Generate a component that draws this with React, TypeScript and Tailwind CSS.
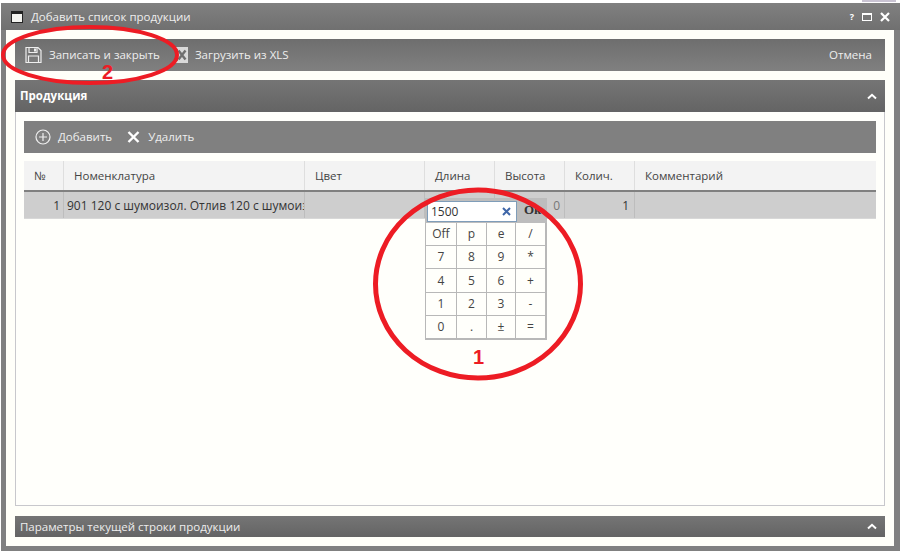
import React from 'react';

const columns = [
  { title: '№', width: 'w-[40px]', value: '1', align: 'text-right pr-[3px]' },
  { title: 'Номенклатура', width: 'w-[241px]', value: '901 120 с шумоизол. Отлив 120 с шумоизол.', align: 'pl-[3px]' },
  { title: 'Цвет', width: 'w-[120px]', value: '', align: '' },
  { title: 'Длина', width: 'w-[70px]', value: '', align: '' },
  { title: 'Высота', width: 'w-[70px]', value: '0', align: 'text-right pr-[4px] text-[#777]' },
  { title: 'Колич.', width: 'w-[70px]', value: '1', align: 'text-right pr-[5px]' },
  { title: 'Комментарий', width: 'flex-1', value: '', align: '' },
];

const keys = ['Off', 'p', 'e', '/', '7', '8', '9', '*', '4', '5', '6', '+', '1', '2', '3', '-', '0', '.', '±', '='];

const ChevronUp = () => (
  <svg width="10" height="7" viewBox="0 0 10 7" className="block">
    <path d="M1 5.5 L5 1.8 L9 5.5" fill="none" stroke="#fff" strokeWidth="2" />
  </svg>
);

const SaveIcon = () => (
  <svg width="17" height="18" viewBox="0 0 17 18" className="block">
    <path d="M1 1.5 H13 L16 4.5 V16.5 H1 Z" fill="none" stroke="#eee" strokeWidth="1.2" />
    <path d="M4 1.5 V6.5 H12 V1.5" fill="none" stroke="#eee" strokeWidth="1.2" />
    <rect x="9" y="2.5" width="2" height="3" fill="#eee" />
    <path d="M3.5 16.5 V10 H13.5 V16.5" fill="none" stroke="#eee" strokeWidth="1.2" />
  </svg>
);

const XlsIcon = () => (
  <svg width="12" height="16" viewBox="0 0 12 16" className="block">
    <rect x="0" y="0" width="12" height="16" fill="#d9d9d9" />
    <path d="M2.5 3.5 L9.5 12.5 M9.5 3.5 L2.5 12.5" stroke="#6f6f6f" strokeWidth="2.4" />
    <rect x="0" y="2" width="2" height="12" fill="#8a8a8a" />
  </svg>
);

const Section = ({ title, bold }: { title: string; bold?: boolean }) => (
  <div className={`mx-[9px] flex items-center justify-between pl-[5px] pr-[8px] text-[#eee] bg-gradient-to-b from-[#757575] to-[#646464] ${bold ? 'h-[32px] font-bold text-white' : 'h-[21px]'}`}>
    <span>{title}</span>
    <ChevronUp />
  </div>
);

export default function App() {
  return (
    <div className="relative w-[900px] h-[552px] overflow-hidden bg-white pt-[3px] pl-[1px] text-[11.5px] leading-none font-['Open_Sans','Noto_Sans',sans-serif]">
      {/* bit of the page behind the window */}
      <div className="absolute left-[862px] top-0 w-[34px] h-[2px] bg-[#c9c3d2]" />
      <div className="h-[548px] flex flex-col bg-[#808080] px-[5px] pb-[5px]">
        {/* window title */}
        <div className="h-[27px] shrink-0 flex items-center justify-between text-[#eee] bg-gradient-to-b from-[#808080] to-[#707070] -mx-[5px]">
          <div className="flex items-center gap-[8px] pl-[10px]">
            <span className="w-[12px] h-[12px] bg-[#f4f4f0] border border-[#222] border-t-[3px] block" />
            <span>Добавить список продукции</span>
          </div>
          <div className="flex items-center gap-[8px] pr-[10px]">
            <span className="font-bold text-[9px] text-white">?</span>
            <span className="w-[10px] h-[8px] border border-white border-t-2 block" />
            <svg width="10" height="10" viewBox="0 0 10 10" className="block">
              <path d="M1 1 L9 9 M9 1 L1 9" stroke="#fff" strokeWidth="2.2" />
            </svg>
          </div>
        </div>

        <div className="flex-1 flex flex-col bg-[#fffff9] pt-[9px] w-[888px]">
          {/* main toolbar */}
          <div className="mx-[9px] h-[32px] flex items-center justify-between bg-gradient-to-b from-[#6e6e6e] to-[#808080] text-[#eee] pl-[10px] pr-[13px]">
            <div className="flex items-center">
              <SaveIcon />
              <span className="ml-[7px]">Записать и закрыть</span>
              <span className="ml-[16px]"><XlsIcon /></span>
              <span className="ml-[7px]">Загрузить из XLS</span>
            </div>
            <span>Отмена</span>
          </div>

          <div className="h-[9px] shrink-0" />
          <Section title="Продукция" bold />

          {/* section body */}
          <div className="mx-[9px] h-[394px] shrink-0 border border-t-0 border-[#c8c8cc] bg-[#fffffb] px-[8px] pt-[9px]">
            <div className="h-[32px] flex items-center bg-[#808080] text-[#eee] pl-[11px]">
              <svg width="16" height="16" viewBox="0 0 16 16" className="block">
                <circle cx="8" cy="8" r="7" fill="none" stroke="#eee" strokeWidth="1.2" />
                <path d="M8 4 V12 M4 8 H12" stroke="#eee" strokeWidth="1.2" />
              </svg>
              <span className="ml-[7px]">Добавить</span>
              <svg width="13" height="12" viewBox="0 0 13 12" className="block ml-[15px]">
                <path d="M1.5 1 L11.5 11 M11.5 1 L1.5 11" stroke="#fff" strokeWidth="2.4" />
              </svg>
              <span className="ml-[8px]">Удалить</span>
            </div>

            {/* table */}
            <div className="mt-[8px] flex h-[31px] bg-[#f3f3f3] border-b-[2px] border-[#808080] text-[#444]">
              {columns.map((c) => (
                <div key={c.title} className={`${c.width} h-full flex items-center pl-[10px] border-r border-[#dedede] last:border-r-0`}>
                  {c.title}
                </div>
              ))}
            </div>
            <div className="flex h-[27px] bg-[#cecece] text-[#333] border-b border-[#d8d8d8] text-[12px]">
              {columns.map((c) => (
                <div key={c.title} className={`${c.width} ${c.align} h-full leading-[27px] overflow-hidden whitespace-nowrap border-r border-[#bdbdbd] last:border-r-0`}>
                  {c.value}
                </div>
              ))}
            </div>
          </div>

          <div className="h-[10px] shrink-0" />
          <Section title="Параметры текущей строки продукции" />
        </div>
      </div>

      {/* calculator popup */}
      <div className="absolute left-[425px] top-[198px] w-[122px] text-[#444] text-[12px]">
        <div className="flex h-[25px] bg-[#bdbdbd] pl-[2px] pt-[3px]">
          <div className="w-[90px] h-[21px] flex items-center justify-between bg-white border border-[#7f9db9] pl-[3px] pr-[5px] text-[#333]">
            <span>1500</span>
            <svg width="9" height="9" viewBox="0 0 9 9" className="block">
              <path d="M1 1 L8 8 M8 1 L1 8" stroke="#3f66a8" strokeWidth="2" />
            </svg>
          </div>
          <span className="ml-[7px] font-['Liberation_Serif',serif] font-bold text-[13px] leading-[18px] text-[#333]">Ok</span>
        </div>
        <div className="grid grid-cols-[30px_29px_28px_1fr] grid-rows-[22px_22px_23px_22px_22px] border border-[#b8b8b8] border-t-0 border-b-2 border-r-2 bg-[#b8b8b8] gap-px">
          {keys.map((k) => (
            <div key={k} className="bg-[#fffffb] flex items-center justify-center">{k}</div>
          ))}
        </div>
      </div>

      {/* red annotations on the screenshot */}
      <svg width="900" height="552" viewBox="0 0 900 552" className="absolute left-0 top-0 pointer-events-none">
        <ellipse cx="90" cy="55" rx="87" ry="28" fill="none" stroke="#ed1c24" strokeWidth="4" />
        <ellipse cx="478" cy="284" rx="102.5" ry="94" fill="none" stroke="#ed1c24" strokeWidth="5" />
      </svg>
      <span className="absolute left-[102px] top-[62px] text-[20px] font-bold text-[#ed1c24] font-['Liberation_Sans',sans-serif]">2</span>
      <span className="absolute left-[473px] top-[347px] text-[20px] font-bold text-[#ed1c24] font-['Liberation_Sans',sans-serif]">1</span>
    </div>
  );
}
